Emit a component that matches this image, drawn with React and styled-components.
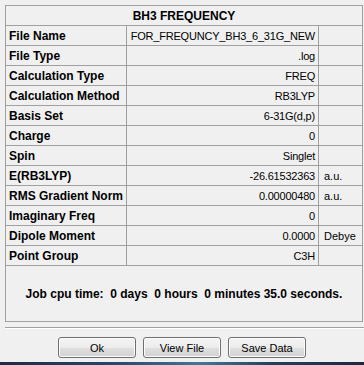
import styled, { createGlobalStyle } from "styled-components";

const GlobalStyle = createGlobalStyle`
  body {
    margin: 0;
    background: #f0f0f0;
    font-family: "Liberation Sans", Arial, sans-serif;
    color: #000;
  }
`;

const Window = styled.div`
  width: 364px;
  height: 365px;
  display: flex;
  flex-direction: column;
  background: #f0f0f0;
  overflow: hidden;
`;

const Panel = styled.div`
  margin: 5px 1px 0 5px;
  height: 315px;
  border: 1px solid #a0a0a0;
  display: flex;
  flex-direction: column;
`;

const TitleRow = styled.div`
  height: 19px;
  border-bottom: 1px solid #a0a0a0;
  display: flex;
  align-items: center;
  justify-content: center;
  font-weight: bold;
  font-size: 12px;
`;

const Row = styled.div`
  display: grid;
  grid-template-columns: 121px 192px 1fr;
  height: 19px;
  border-bottom: 1px solid #a0a0a0;
`;

const Cell = styled.div`
  display: flex;
  align-items: center;
  white-space: nowrap;
  overflow: hidden;
  border-right: ${(p) => (p.$last ? "none" : "1px solid #a0a0a0")};
`;

const Label = styled(Cell)`
  padding-left: 3px;
  font-weight: bold;
  font-size: 12px;
`;

const Value = styled(Cell)`
  justify-content: flex-end;
  padding-right: 3px;
  font-size: 11px;
  letter-spacing: -0.2px;
`;

const Unit = styled(Cell)`
  padding-left: 5px;
  font-size: 11px;
`;

const Footer = styled.div`
  flex: 1;
  display: flex;
  align-items: center;
  justify-content: center;
  font-weight: bold;
  font-size: 12px;
  white-space: pre;
`;

const Separator = styled.div`
  margin: 5px 0 0 5px;
  height: 1px;
  background: #a0a0a0;
  border-bottom: 1px solid #ffffff;
`;

const ButtonBar = styled.div`
  display: flex;
  justify-content: center;
  gap: 7px;
  margin-top: 8px;
`;

const Button = styled.button`
  width: 78px;
  height: 21px;
  padding: 0;
  border: 1px solid #707070;
  border-radius: 3px;
  background: linear-gradient(#f4f4f4 0%, #ececec 50%, #e0e0e0 51%, #d2d2d2 100%);
  box-shadow: inset 0 0 0 1px #fcfcfc;
  font-family: "Liberation Sans", Arial, sans-serif;
  font-size: 11px;
  color: #000;
`;

const TaskStrip = styled.div`
  margin-top: auto;
  height: 3px;
  background: linear-gradient(90deg, #1c2c44 0%, #24466a 30%, #3d7a96 55%, #22405e 75%, #1a2a40 100%);
`;

const rows = [
  ["File Name", "FOR_FREQUNCY_BH3_6_31G_NEW", ""],
  ["File Type", ".log", ""],
  ["Calculation Type", "FREQ", ""],
  ["Calculation Method", "RB3LYP", ""],
  ["Basis Set", "6-31G(d,p)", ""],
  ["Charge", "0", ""],
  ["Spin", "Singlet", ""],
  ["E(RB3LYP)", "-26.61532363", "a.u."],
  ["RMS Gradient Norm", "0.00000480", "a.u."],
  ["Imaginary Freq", "0", ""],
  ["Dipole Moment", "0.0000", "Debye"],
  ["Point Group", "C3H", ""],
];

export default function App() {
  return (
    <Window>
      <GlobalStyle />
      <Panel>
        <TitleRow>BH3 FREQUENCY</TitleRow>
        {rows.map(([label, value, unit]) => (
          <Row key={label}>
            <Label>{label}</Label>
            <Value>{value}</Value>
            <Unit $last>{unit}</Unit>
          </Row>
        ))}
        <Footer>{"Job cpu time:  0 days  0 hours  0 minutes 35.0 seconds."}</Footer>
      </Panel>
      <Separator />
      <ButtonBar>
        <Button>Ok</Button>
        <Button>View File</Button>
        <Button>Save Data</Button>
      </ButtonBar>
      <TaskStrip />
    </Window>
  );
}
